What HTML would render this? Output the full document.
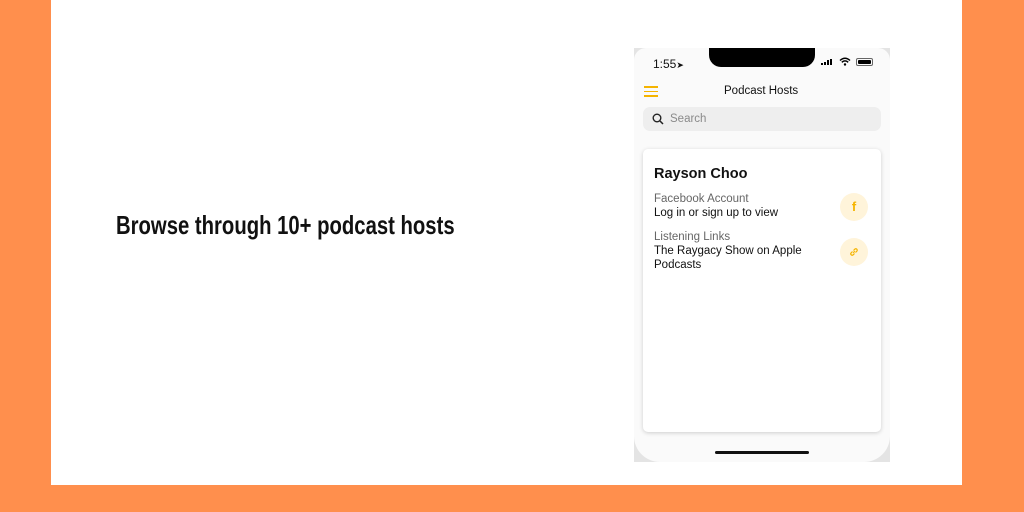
<!DOCTYPE html>
<html><head><style>
*{margin:0;padding:0;box-sizing:border-box}
body{width:1024px;height:512px;background:#FF8F4D;position:relative;overflow:hidden;font-family:"Liberation Sans",sans-serif}
.panel{position:absolute;left:51px;top:0;width:911px;height:485px;background:#fff}
h1{position:absolute;left:116px;top:210px;font-family:"Liberation Sans Narrow","Liberation Sans",sans-serif;font-weight:bold;font-size:26px;color:#111;white-space:nowrap;transform-origin:left top;transform:scaleX(0.78);letter-spacing:0}
.phone{position:absolute;left:634px;top:48px;width:256px;height:414px;background:#e4e4e4;overflow:hidden}
.scr{position:absolute;left:0;top:0;width:256px;height:414px;background:#fafafa;border-radius:12px 12px 26px 26px}
.notch{position:absolute;left:75px;top:0;width:106px;height:19px;background:#000;border-radius:0 0 12px 12px}
.t{position:absolute;font-size:11.5px;color:#111}
.search{position:absolute;left:9px;top:59px;width:238px;height:24px;background:#eeeeee;border-radius:7px}
.card{position:absolute;left:9px;top:101px;width:238px;height:283px;background:#fff;border-radius:5px;box-shadow:0 1px 4px rgba(0,0,0,.18)}
.ic{position:absolute;width:28px;height:28px;border-radius:50%;background:#FFF4DA;color:#F5B400;text-align:center;font-weight:bold}
.bar{position:absolute;left:81px;top:403px;width:94px;height:3px;background:#111;border-radius:2px}
</style></head><body>
<div class="panel"></div>
<h1>Browse through 10+ podcast hosts</h1>
<div class="phone"><div class="scr">
<div class="notch"></div>
<div class="t" style="left:19px;top:9px;font-size:12px">1:55<span style="font-size:9px">➤</span></div>
<div style="position:absolute;left:187px;top:11px;width:14px;height:6px">
<div style="position:absolute;left:0;bottom:0;width:2px;height:2px;background:#000"></div>
<div style="position:absolute;left:3px;bottom:0;width:2px;height:3px;background:#000"></div>
<div style="position:absolute;left:6px;bottom:0;width:2px;height:5px;background:#000"></div>
<div style="position:absolute;left:9px;bottom:0;width:2px;height:6px;background:#000"></div></div>
<svg style="position:absolute;left:205px;top:9px" width="12" height="9" viewBox="0 0 12 9"><path d="M1 3.5Q6 -1 11 3.5M2.8 5.3Q6 2.5 9.2 5.3" stroke="#000" stroke-width="1.5" fill="none"/><circle cx="6" cy="7.5" r="1.2"/></svg>
<div style="position:absolute;left:222px;top:10px;width:17px;height:8px;border:1px solid #666;border-radius:2px;padding:1px"><div style="width:100%;height:100%;background:#000;border-radius:1px"></div></div>
<div style="position:absolute;left:10px;top:38px;width:14px">
<div style="height:1.5px;background:#F5B400;margin-bottom:3px"></div><div style="height:1.5px;background:#F5B400;margin-bottom:3px"></div><div style="height:1.5px;background:#F5B400"></div></div>
<div class="t" style="left:90px;top:37px">Podcast Hosts</div>
<div class="search">
<svg style="position:absolute;left:9px;top:6px" width="12" height="12" viewBox="0 0 12 12"><circle cx="5" cy="5" r="3.8" stroke="#222" stroke-width="1.4" fill="none"/><path d="M8 8L11 11" stroke="#222" stroke-width="1.5"/></svg>
<div class="t" style="left:27px;top:6px;color:#8a8a8a">Search</div></div>
<div class="card">
<div class="t" style="left:11px;top:17px;font-size:14.5px;font-weight:bold">Rayson Choo</div>
<div class="t" style="left:11px;top:44px;color:#666">Facebook Account</div>
<div class="t" style="left:11px;top:58px">Log in or sign up to view</div>
<div class="t" style="left:11px;top:82px;color:#666">Listening Links</div>
<div class="t" style="left:11px;top:96px;line-height:13.5px">The Raygacy Show on Apple<br>Podcasts</div>
<div class="ic" style="left:197px;top:44px;font-size:13px;line-height:28px">f</div>
<div class="ic" style="left:197px;top:89px"><svg style="margin-top:9px" width="10" height="10" viewBox="0 0 10 10"><path d="M4.2 5.8L5.8 4.2M3.5 4.5L2.2 5.8a1.4 1.4 0 0 0 2 2L5.5 6.5M4.5 3.5L5.8 2.2a1.4 1.4 0 0 1 2 2L6.5 5.5" stroke="#F5B400" stroke-width="1.2" fill="none"/></svg></div>
</div>
<div class="bar"></div>
</div></div>
</body></html>
